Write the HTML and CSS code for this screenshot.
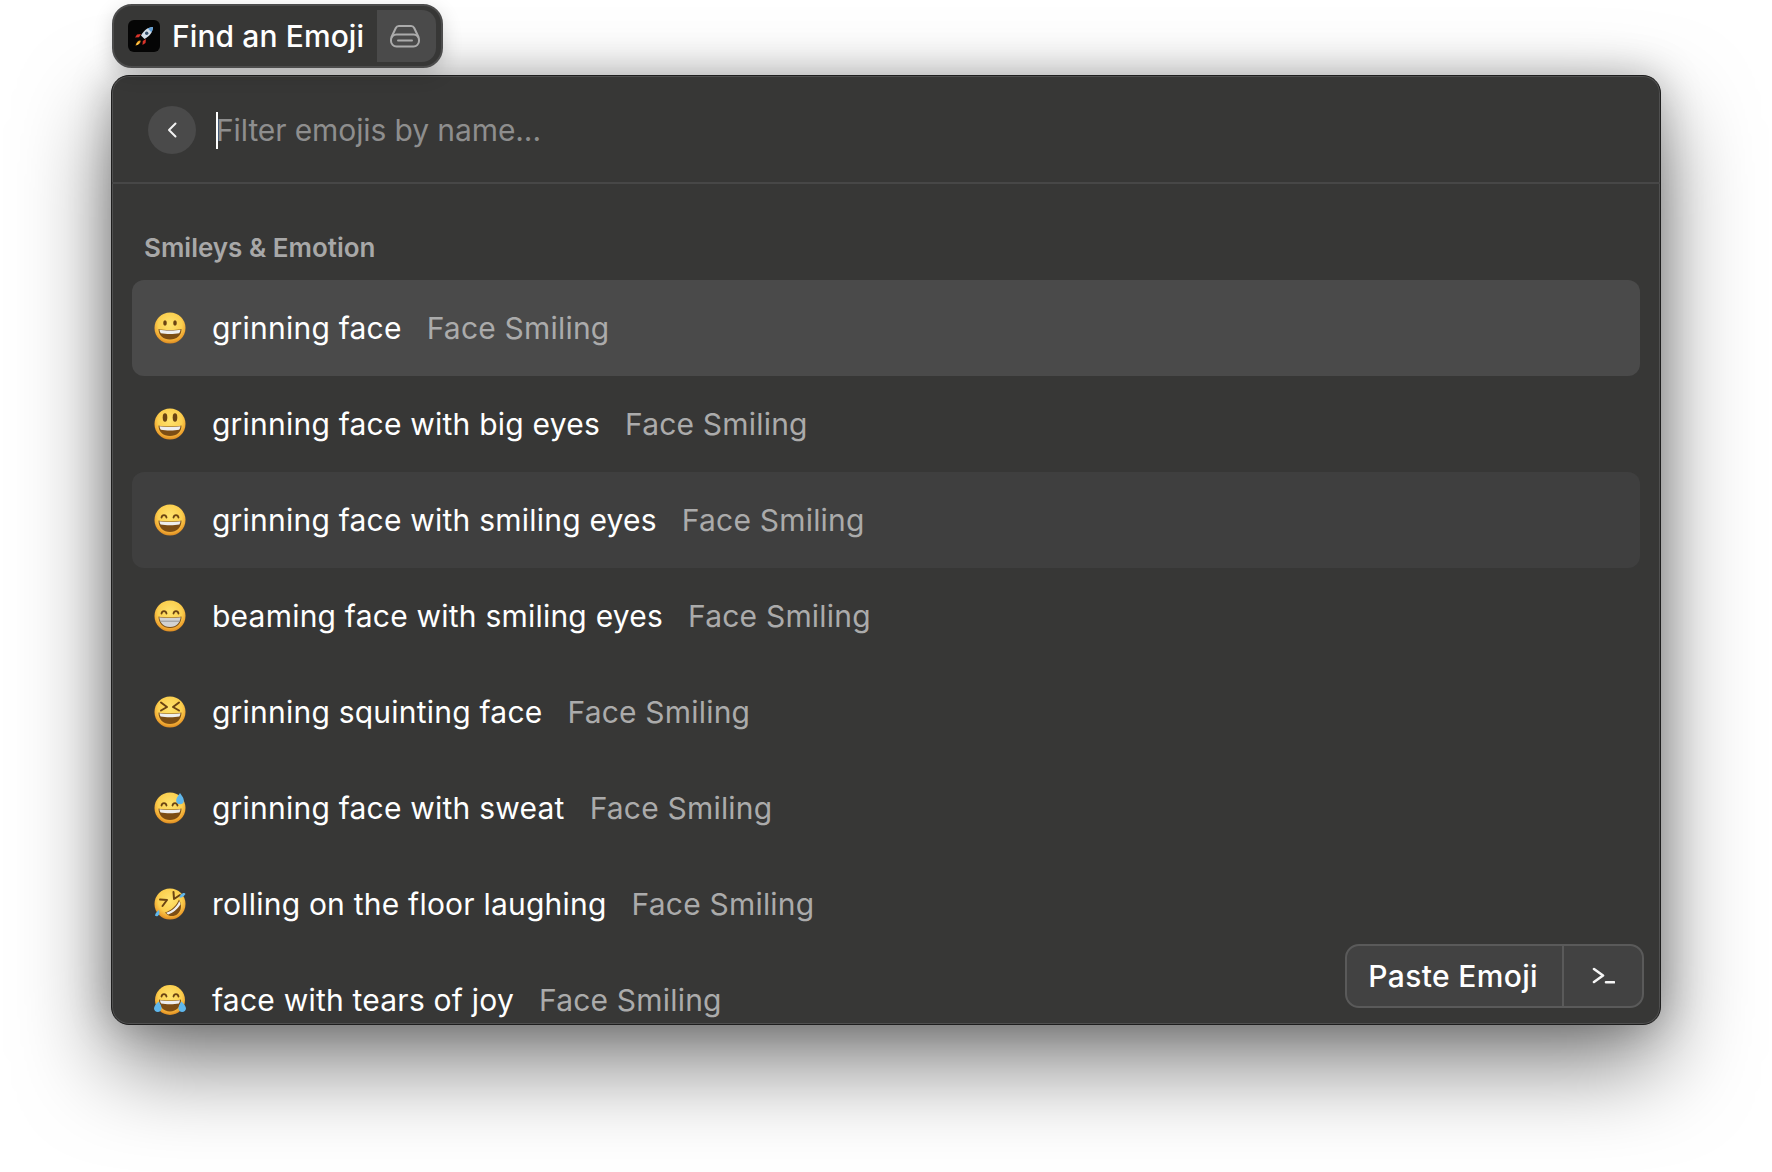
FILE: index.html
```html
<!DOCTYPE html>
<html lang="en">
<head>
<meta charset="utf-8">
<title>Find an Emoji</title>
<link rel="stylesheet" href="styles.css">
</head>
<body>
<svg class="defs" width="0" height="0" aria-hidden="true">
  <defs>
    <radialGradient id="skin" cx="50%" cy="38%" r="62%">
      <stop offset="0" stop-color="#ffe36e"/>
      <stop offset=".62" stop-color="#fbcf4f"/>
      <stop offset=".88" stop-color="#eea32f"/>
      <stop offset="1" stop-color="#d98a22"/>
    </radialGradient>
    <symbol id="e-grin" viewBox="0 0 32 32">
      <circle cx="16" cy="16" r="15.5" fill="url(#skin)"/>
      <ellipse cx="11" cy="11" rx="1.800" ry="2.800" fill="#6b4413"/>
      <ellipse cx="21" cy="11" rx="1.800" ry="2.800" fill="#6b4413"/>
      <path d="M4.500 17c4 1.300 19 1.300 23 0 0 6.500-5 10.500-11.500 10.500S4.500 23.500 4.500 17z" fill="#7c4d14"/>
      <path d="M5.500 17.700c4 1.100 17 1.100 21 0-.2 1.500-.6 2.600-1.300 3.600-5 1-13.400 1-18.400 0-.7-1-1.100-2.100-1.300-3.600z" fill="#eee"/>
    </symbol>
    <symbol id="e-big" viewBox="0 0 32 32">
      <circle cx="16" cy="16" r="15.500" fill="url(#skin)"/>
      <ellipse cx="11" cy="9.500" rx="2.300" ry="4.200" fill="#6b4413"/>
      <ellipse cx="21" cy="9.500" rx="2.300" ry="4.200" fill="#6b4413"/>
      <path d="M4.500 17.500c4 1.300 19 1.300 23 0 0 6.500-5 10.500-11.500 10.500S4.500 24 4.500 17.500z" fill="#7c4d14"/>
      <path d="M5.500 18.200c4 1.100 17 1.100 21 0-.2 1.500-.6 2.600-1.300 3.600-5 1-13.400 1-18.400 0-.7-1-1.100-2.100-1.300-3.600z" fill="#eee"/>
    </symbol>
    <symbol id="e-smile" viewBox="0 0 32 32">
      <circle cx="16" cy="16" r="15.500" fill="url(#skin)"/>
      <path d="M7.500 13.500c.6-3.200 4.400-3.200 5 0M19.500 13.500c.6-3.200 4.400-3.200 5 0" fill="none" stroke="#6b4413" stroke-width="1.800" stroke-linecap="round"/>
      <path d="M4.500 16.500c4 1.300 19 1.300 23 0 0 7-5 11.500-11.500 11.500S4.500 23.500 4.500 16.500z" fill="#7c4d14"/>
      <path d="M5.500 17.200c4 1.100 17 1.100 21 0-.2 1.400-.5 2.300-1.100 3.200-5 1-13.800 1-18.800 0-.6-.9-.9-1.800-1.100-3.200z" fill="#eee"/>
    </symbol>
    <symbol id="e-beam" viewBox="0 0 32 32">
      <circle cx="16" cy="16" r="15.500" fill="url(#skin)"/>
      <path d="M7.500 13.500c.6-3.200 4.400-3.200 5 0M19.500 13.500c.6-3.200 4.400-3.200 5 0" fill="none" stroke="#6b4413" stroke-width="1.800" stroke-linecap="round"/>
      <path d="M4.500 16.500c4 1.300 19 1.300 23 0 0 7-5 11.500-11.500 11.500S4.500 23.500 4.500 16.500z" fill="#7c4d14"/>
      <path d="M5.300 17.200c4.200 1.100 17.200 1.100 21.400 0-.5 4.700-3.800 9.800-10.700 9.800S5.800 21.900 5.300 17.200z" fill="#d2d2d2"/>
      <path d="M5.800 21.200h20.400" stroke="#8f8f8f" stroke-width=".9"/>
    </symbol>
    <symbol id="e-squint" viewBox="0 0 32 32">
      <circle cx="16" cy="16" r="15.500" fill="url(#skin)"/>
      <path d="M7 6.500l6 4.500-6 3.500M25 6.500l-6 4.500 6 3.500" fill="none" stroke="#6b4413" stroke-width="2" stroke-linecap="round" stroke-linejoin="round"/>
      <path d="M4.500 16.500c4 1.300 19 1.300 23 0 0 7-5 11.500-11.500 11.500S4.500 23.500 4.500 16.500z" fill="#7c4d14"/>
      <path d="M5.500 17.200c4 1.100 17 1.100 21 0-.2 1.400-.5 2.300-1.100 3.200-5 1-13.800 1-18.800 0-.6-.9-.9-1.800-1.100-3.200z" fill="#eee"/>
    </symbol>
    <symbol id="e-sweat" viewBox="0 0 32 32">
      <circle cx="16" cy="16" r="15.500" fill="url(#skin)"/>
      <path d="M7.500 13.500c.6-3.200 4.400-3.200 5 0M18.500 13.500c.6-3.200 4.400-3.200 5 0" fill="none" stroke="#6b4413" stroke-width="1.800" stroke-linecap="round"/>
      <path d="M4.500 16.500c4 1.300 19 1.300 23 0 0 7-5 11.500-11.500 11.500S4.500 23.500 4.500 16.500z" fill="#7c4d14"/>
      <path d="M5.500 17.200c4 1.100 17 1.100 21 0-.2 1.400-.5 2.300-1.100 3.200-5 1-13.800 1-18.800 0-.6-.9-.9-1.800-1.100-3.200z" fill="#eee"/>
      <path d="M26 1c2.600 3.600 3.800 5.600 3.800 7.400a3.800 3.800 0 0 1-7.600 0C22.200 6.600 23.400 4.600 26 1z" fill="#5fb7ec"/>
    </symbol>
    <symbol id="e-rofl" viewBox="0 0 32 32">
      <circle cx="16" cy="16" r="15.500" fill="url(#skin)"/>
      <path d="M6 11.500l7 .5-4.500 6M19.500 4l.5 7 6-4" fill="none" stroke="#6b4413" stroke-width="2" stroke-linecap="round" stroke-linejoin="round"/>
      <path d="M11 24.500C17 23 23 17 25 11.500c3.500 6 2 11.500-1.500 14.500S14.500 29 11 24.500z" fill="#7c4d14"/>
      <path d="M12.200 24.800C18 23.200 23.600 18 25.200 13c.8 1.300 1.100 2.300 1.300 3.300-2.800 4.800-8 9-12.300 10.200-.8-.4-1.400-.9-2-1.700z" fill="#eee"/>
      <path d="M1 27.500c.5-2.500 1.800-4 4-5.500.8 2.500.5 4.500-1 5.800-1 .8-2.300.6-3-.3zM31.500 6c-1.500 2.400-3.500 3.600-6 3.800.5-2.500 1.800-4.200 3.800-4.800 1-.3 1.800 0 2.200 1z" fill="#5fb7ec"/>
    </symbol>
    <symbol id="e-joy" viewBox="0 0 32 32">
      <circle cx="16" cy="16" r="15" fill="url(#skin)"/>
      <path d="M7.500 12.500c.6-3.200 4.400-3.200 5 0M19.500 12.500c.6-3.200 4.400-3.200 5 0" fill="none" stroke="#6b4413" stroke-width="1.800" stroke-linecap="round"/>
      <path d="M5 15.500c4 1.300 18 1.300 22 0 0 7-4.500 12-11 12S5 22.500 5 15.500z" fill="#7c4d14"/>
      <path d="M6 16.200c4 1.100 16 1.100 20 0-.2 1.400-.5 2.300-1.100 3.200-4.800 1-13 1-17.800 0-.6-.9-.9-1.800-1.100-3.200z" fill="#eee"/>
      <path d="M4.500 17.500c2 2.500 3 4.700 3 6.800 0 2.200-1.700 3.700-3.700 3.700S0 26.400 0 24.500c0-2 1.700-4.300 4.500-7zM27.500 17.500c-2 2.500-3 4.700-3 6.800 0 2.200 1.700 3.700 3.700 3.700s3.800-1.600 3.800-3.500c0-2-1.700-4.300-4.500-7z" fill="#5fb7ec"/>
    </symbol>
  </defs>
</svg>

<main class="stage">
  <header class="tab">
    <span class="app-icon">
      <svg viewBox="0 0 32 32" width="32" height="32">
        <rect width="32" height="32" rx="6" fill="#050505"/>
        <path d="M13 14l-4 .5-2 3 4-.3zM18 19l-.5 4-3 2 .3-4z" fill="#d9342b"/>
        <path d="M12.500 20.500c-2-.2-4 1.200-5 5 3.500-.8 5.500-2.800 5-5z" fill="#f5a623"/>
        <path d="M10.800 22.500c-1 .2-1.700.9-2 2.200 1.300-.3 2-1 2-2.200z" fill="#ffe07a"/>
        <path d="M25 7c-5 .3-9 3-12 8.500l3.500 3.500c5.500-3 8.200-7 8.500-12z" fill="#d4dee8"/>
        <path d="M25 7c-1.800.1-3.600.7-5.200 1.600l3.600 3.600c.9-1.600 1.500-3.400 1.600-5.200z" fill="#5f9fd8"/>
        <circle cx="18.700" cy="13.300" r="1.700" fill="#37506b"/>
      </svg>
    </span>
    <span class="tab-title">Find an Emoji</span>
    <span class="tab-action">
      <svg viewBox="0 0 32 24" width="32" height="24" fill="none" stroke="#ababab" stroke-width="2" stroke-linecap="round" stroke-linejoin="round">
        <path d="M2.500 13 6.800 4C7.400 2.700 8.400 2 9.900 2h12.200c1.500 0 2.500.7 3.100 2l4.300 9"/>
        <rect x="2" y="10.500" width="28" height="12" rx="5.500"/>
        <path d="M9 16.500h14"/>
      </svg>
    </span>
  </header>

  <section class="window">
    <div class="search">
      <button class="back" type="button" aria-label="Back">
        <svg viewBox="0 0 12 18" width="12" height="18" fill="none" stroke="#f2f2f2" stroke-width="2" stroke-linecap="round" stroke-linejoin="round"><path d="M9.500 2.500 3 9l6.500 6.500"/></svg>
      </button>
      <span class="caret"></span>
      <span class="placeholder">Filter emojis by name...</span>
    </div>
    <div class="results">
      <h2 class="group">Smileys &amp; Emotion</h2>
      <ul class="list">
        <li class="row is-selected"><svg class="emoji"><use href="#e-grin"/></svg><span class="name">grinning face</span><span class="cat">Face Smiling</span></li>
        <li class="row"><svg class="emoji"><use href="#e-big"/></svg><span class="name">grinning face with big eyes</span><span class="cat">Face Smiling</span></li>
        <li class="row is-hover"><svg class="emoji"><use href="#e-smile"/></svg><span class="name">grinning face with smiling eyes</span><span class="cat">Face Smiling</span></li>
        <li class="row"><svg class="emoji"><use href="#e-beam"/></svg><span class="name">beaming face with smiling eyes</span><span class="cat">Face Smiling</span></li>
        <li class="row"><svg class="emoji"><use href="#e-squint"/></svg><span class="name">grinning squinting face</span><span class="cat">Face Smiling</span></li>
        <li class="row"><svg class="emoji"><use href="#e-sweat"/></svg><span class="name">grinning face with sweat</span><span class="cat">Face Smiling</span></li>
        <li class="row"><svg class="emoji"><use href="#e-rofl"/></svg><span class="name">rolling on the floor laughing</span><span class="cat">Face Smiling</span></li>
        <li class="row"><svg class="emoji"><use href="#e-joy"/></svg><span class="name">face with tears of joy</span><span class="cat">Face Smiling</span></li>
      </ul>
    </div>
    <div class="paste">
      <span class="paste-label">Paste Emoji</span>
      <span class="paste-key">
        <svg viewBox="0 0 24 18" width="24" height="18" fill="none" stroke="#f5f5f5" stroke-width="2.600" stroke-linecap="round" stroke-linejoin="round"><path d="M3 2 12 8.500 3 15M15 15.200h8"/></svg>
      </span>
    </div>
  </section>
</main>
</body>
</html>
```

FILE: styles.css
```css
* { box-sizing: border-box; }

html, body {
  margin: 0;
  height: 100%;
  overflow: hidden;
  background: #fff;
}

body {
  font-family: Inter, "Liberation Sans", sans-serif;
  color: #fff;
}

.defs { position: absolute; }

.stage {
  display: flex;
  flex-direction: column;
  align-items: flex-start;
  padding: 4px 0 0 112px;
}

.tab {
  display: flex;
  align-items: stretch;
  height: 64px;
  width: 331px;
  padding: 4px 5px;
  background: #373736;
  border: 2px solid #4c4c4c;
  border-radius: 20px;
  box-shadow: 0 6px 20px rgba(0, 0, 0, .16);
  position: relative;
  z-index: 1;
}

.app-icon {
  display: flex;
  align-items: center;
  margin-left: 9px;
}

.tab-title {
  display: flex;
  align-items: center;
  margin-left: 12px;
  font-size: 30px;
  font-weight: 500;
  letter-spacing: .1px;
  white-space: nowrap;
}

.tab-action {
  display: flex;
  align-items: center;
  justify-content: center;
  margin-left: auto;
  width: 59px;
  padding-right: 4px;
  background: #4a4a4a;
  border-radius: 0 14px 14px 0;
}

.window {
  position: relative;
  width: 1550px;
  height: 950px;
  margin: 7px 0 0 -1px;
  overflow: hidden;
  background: #373736;
  border: 1px solid #1e1e1e;
  border-radius: 18px;
  box-shadow: inset 0 0 0 1px #505050, 0 40px 90px rgba(0, 0, 0, .5), 0 0 40px rgba(0, 0, 0, .25);
}

.search {
  display: flex;
  align-items: center;
  height: 108px;
  padding: 2px 0 0 36px;
  border-bottom: 2px solid #474747;
}

.back {
  display: flex;
  align-items: center;
  justify-content: center;
  width: 48px;
  height: 48px;
  padding: 0;
  border: 0;
  border-radius: 50%;
  background: #4a4a4a;
}

.caret {
  width: 2px;
  height: 37px;
  margin-left: 20px;
  background: #fff;
}

.placeholder {
  margin-left: -2px;
  font-size: 30px;
  letter-spacing: -.1px;
  color: #8e8e8e;
  white-space: nowrap;
}

.results { padding: 48px 20px 0; }

.group {
  margin: 0 0 17px 12px;
  font-size: 26px;
  line-height: 31px;
  font-weight: 600;
  color: #a8a8a8;
}

.list {
  margin: 0;
  padding: 0;
  list-style: none;
}

.row {
  display: flex;
  align-items: center;
  height: 96px;
  padding-left: 22px;
  border-radius: 12px;
}

.is-selected { background: #4a4a4a; }
.is-hover { background: #3f3f3f; }

.emoji {
  flex: none;
  width: 32px;
  height: 32px;
}

.name {
  margin-left: 26px;
  font-size: 30px;
  letter-spacing: .22px;
  white-space: nowrap;
}

.cat {
  margin-left: 25px;
  font-size: 30px;
  letter-spacing: .2px;
  color: #ababab;
  white-space: nowrap;
}

.paste {
  position: absolute;
  right: 16px;
  bottom: 16px;
  display: flex;
  align-items: stretch;
  height: 64px;
  background: #424242;
  border: 2px solid #5a5a5a;
  border-radius: 14px;
}

.paste-label {
  display: flex;
  align-items: center;
  padding: 0 24px 0 21px;
  font-size: 30px;
  font-weight: 500;
  letter-spacing: .35px;
  border-right: 2px solid #5a5a5a;
}

.paste-key {
  display: flex;
  align-items: center;
  justify-content: center;
  width: 78px;
}
```
